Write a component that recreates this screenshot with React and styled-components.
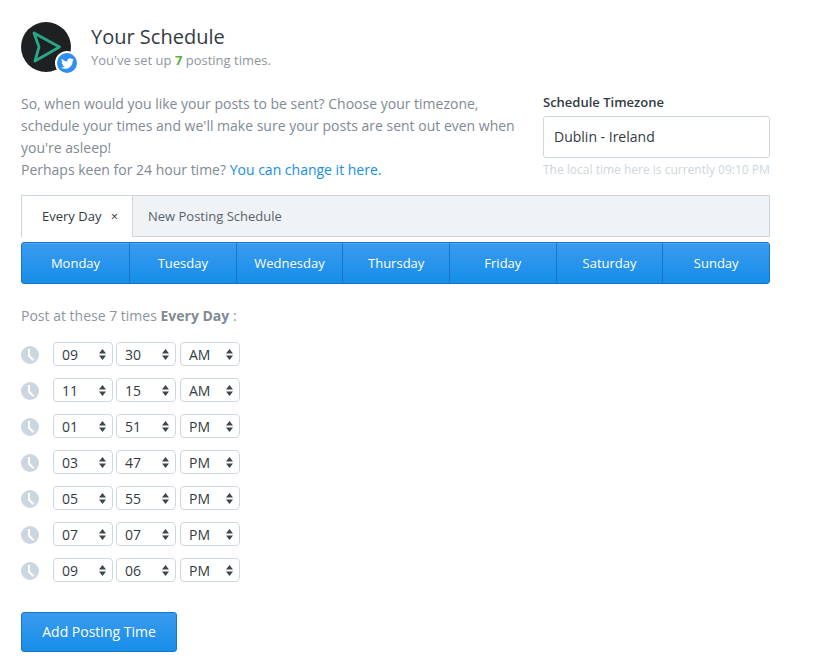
import React from 'react'
import styled, { createGlobalStyle } from 'styled-components'
import { FaTwitter } from 'react-icons/fa'

const GlobalStyle = createGlobalStyle`
  html, body {
    margin: 0;
    padding: 0;
    background: #fff;
    font-family: "Open Sans", "Liberation Sans", sans-serif;
    color: #323b43;
  }
  * { box-sizing: border-box; }
`

const days = ['Monday', 'Tuesday', 'Wednesday', 'Thursday', 'Friday', 'Saturday', 'Sunday']
const times = [
  ['09', '30', 'AM'],
  ['11', '15', 'AM'],
  ['01', '51', 'PM'],
  ['03', '47', 'PM'],
  ['05', '55', 'PM'],
  ['07', '07', 'PM'],
  ['09', '06', 'PM'],
]

const Arrows = () => (
  <svg width="7" height="11" viewBox="0 0 7 11">
    <path d="M3.5 0 L7 4.4 H0 Z M3.5 11 L0 6.6 H7 Z" fill="#3d464d" />
  </svg>
)

const Clock = () => (
  <svg width="18" height="18" viewBox="0 0 18 18">
    <circle cx="9" cy="9" r="9" fill="#ccd6e0" />
    <path d="M8 3 V9.8 L12.6 14.2" fill="none" stroke="#fff" strokeWidth="2" />
  </svg>
)

const App = () => {
  return (
    <Page>
      <GlobalStyle />
      <Header>
        <Avatar>
          <svg width="50" height="50" viewBox="0 0 50 50">
            <circle cx="25" cy="25" r="25" fill="#1f2021" />
            <path
              d="M13 11 L38.5 25 L14 39 L18 25 Z"
              fill="none"
              stroke="#28a888"
              strokeWidth="2.8"
              strokeLinejoin="round"
            />
          </svg>
          <Badge>
            <FaTwitter size={13} color="#fff" />
          </Badge>
        </Avatar>
        <div>
          <Title>Your Schedule</Title>
          <Subtitle>
            You've set up <b>7</b> posting times.
          </Subtitle>
        </div>
      </Header>

      <Intro>
        <IntroText>
          So, when would you like your posts to be sent? Choose your timezone, schedule your times and we'll make
          sure your posts are sent out even when you're asleep!
          <br />
          Perhaps keen for 24 hour time? <a href="#">You can change it here.</a>
        </IntroText>
        <Timezone>
          <TzLabel>Schedule Timezone</TzLabel>
          <TzInput>Dublin - Ireland</TzInput>
          <TzHint>The local time here is currently 09:10 PM</TzHint>
        </Timezone>
      </Intro>

      <Tabs>
        <ActiveTab>
          Every Day <Close>×</Close>
        </ActiveTab>
        <NewTab>New Posting Schedule</NewTab>
      </Tabs>

      <DayBar>
        {days.map((d) => (
          <DayButton key={d}>{d}</DayButton>
        ))}
      </DayBar>

      <PostAt>
        Post at these 7 times <b>Every Day</b> :
      </PostAt>

      <TimeList>
        {times.map((t, i) => (
          <TimeRow key={i}>
            <ClockSlot>
              <Clock />
            </ClockSlot>
            {t.map((v, j) => (
              <Select key={j}>
                {v}
                <Arrows />
              </Select>
            ))}
          </TimeRow>
        ))}
      </TimeList>

      <AddButton>Add Posting Time</AddButton>
    </Page>
  )
}

const Page = styled.div`
  width: 770px;
  padding: 22px 0 0 21px;
`
const Header = styled.header`
  display: flex;
  align-items: center;
  gap: 18px;
  height: 50px;
`
const Avatar = styled.div`
  position: relative;
  width: 52px;
  height: 50px;
  svg {
    display: block;
  }
`
const Badge = styled.div`
  position: absolute;
  right: -6px;
  bottom: -3px;
  width: 24px;
  height: 24px;
  border-radius: 50%;
  background: #2f8ff0;
  border: 2px solid #fff;
  display: flex;
  align-items: center;
  justify-content: center;
`
const Title = styled.h1`
  margin: -2px 0 0;
  font-size: 20px;
  font-weight: 400;
  line-height: 28px;
  color: #323b43;
`
const Subtitle = styled.p`
  margin: 0;
  font-size: 13px;
  line-height: 18px;
  color: #8d969e;
  b {
    color: #59b23a;
    font-weight: 700;
  }
`
const Intro = styled.section`
  display: flex;
  justify-content: space-between;
  margin-top: 21px;
`
const IntroText = styled.p`
  margin: 0;
  width: 502px;
  font-size: 14px;
  line-height: 22px;
  color: #7f8a94;
  a {
    color: #168eea;
    text-decoration: none;
  }
`
const Timezone = styled.div`
  width: 227px;
`
const TzLabel = styled.div`
  font-size: 13px;
  font-weight: 600;
  line-height: 18px;
  color: #323b43;
`
const TzInput = styled.div`
  margin-top: 5px;
  height: 42px;
  border: 1px solid #ced7df;
  border-radius: 3px;
  padding: 0 10px;
  font-size: 14px;
  line-height: 40px;
  color: #323b43;
`
const TzHint = styled.div`
  margin-top: 4px;
  font-size: 12px;
  line-height: 16px;
  white-space: nowrap;
  color: #ccd6e0;
`
const Tabs = styled.div`
  display: flex;
  height: 42px;
  margin-top: 14px;
  border: 1px solid #ced7df;
  background: #eff3f6;
  font-size: 13px;
`
const ActiveTab = styled.div`
  width: 112px;
  margin: 0 0 -1px -1px;
  padding-left: 20px;
  background: #fff;
  border-left: 1px solid #ced7df;
  border-right: 1px solid #ced7df;
  line-height: 41px;
  color: #323b43;
`
const Close = styled.span`
  margin-left: 6px;
  font-size: 13px;
`
const NewTab = styled.div`
  padding-left: 15px;
  line-height: 41px;
  color: #59626a;
`
const DayBar = styled.div`
  display: flex;
  height: 42px;
  margin-top: 5px;
  border: 1px solid #1675c4;
  border-radius: 3px;
  background: linear-gradient(#3a9bee, #168eea);
  box-shadow: inset 0 1px 0 rgba(255, 255, 255, 0.12);
`
const DayButton = styled.div`
  flex: 1;
  text-align: center;
  font-size: 13px;
  line-height: 40px;
  color: #fff;
  border-left: 1px solid #1675c4;
  &:first-child {
    flex: none;
    width: 107px;
    border-left: 0;
  }
`
const PostAt = styled.p`
  margin: 22px 0 0;
  font-size: 14px;
  line-height: 20px;
  color: #8d969e;
  b {
    font-weight: 700;
    color: #7f8a94;
  }
`
const TimeList = styled.div`
  display: flex;
  flex-direction: column;
  gap: 12px;
  margin-top: 16px;
`
const TimeRow = styled.div`
  display: flex;
  align-items: center;
  gap: 3px;
  height: 24px;
`
const ClockSlot = styled.div`
  width: 29px;
  display: flex;
  svg {
    margin-top: 2px;
  }
`
const Select = styled.div`
  display: flex;
  align-items: center;
  justify-content: space-between;
  width: 60px;
  height: 24px;
  padding: 0 6px 0 8px;
  border: 1px solid #ced7df;
  border-radius: 4px;
  font-size: 14px;
  color: #323b43;
  &:last-child {
    margin-left: 1px;
  }
`
const AddButton = styled.button`
  display: block;
  width: 156px;
  height: 40px;
  margin-top: 30px;
  padding: 0 0 2px;
  border: 1px solid #1675c4;
  border-radius: 3px;
  background: linear-gradient(#3a9bee, #168eea);
  font-family: inherit;
  font-size: 14px;
  color: #fff;
`

export default App
